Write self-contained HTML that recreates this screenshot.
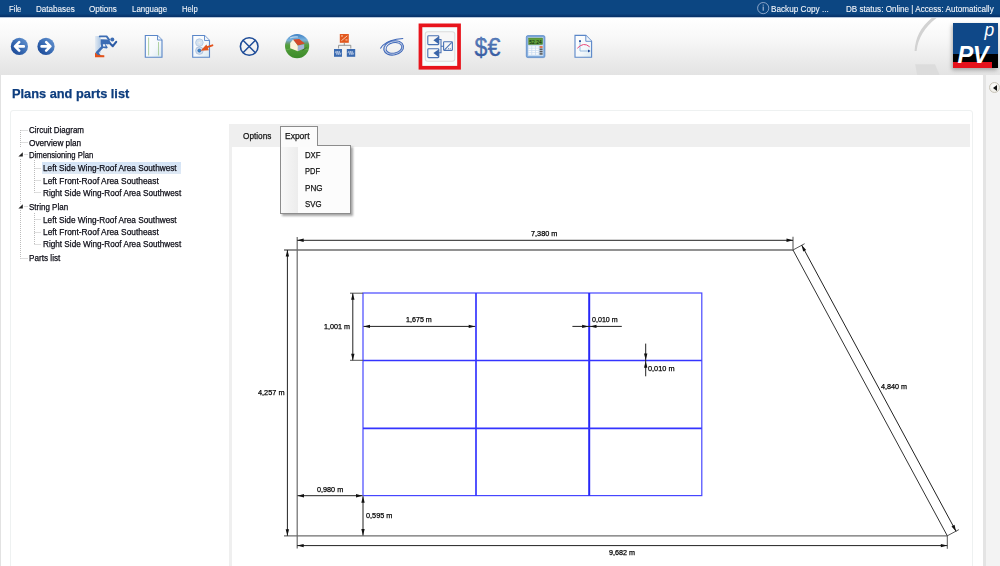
<!DOCTYPE html>
<html><head><meta charset="utf-8">
<style>
html,body{margin:0;padding:0;}
body{width:1000px;height:566px;overflow:hidden;position:relative;background:#fff;font-family:"Liberation Sans",sans-serif;}
.a{position:absolute;}
.t{position:absolute;white-space:nowrap;line-height:1;transform-origin:0 0;font-family:"Liberation Sans",sans-serif;-webkit-text-stroke:0.25px currentColor;}
</style></head><body>
<!-- menu bar -->
<div class="a" style="left:0;top:0;width:1000px;height:17px;background:linear-gradient(#0c4682 0%,#0c4682 80%,#062f66 100%);"></div>
<div class="a" style="left:0;top:17px;width:1000px;height:1px;background:#b8c8dc;"></div>
<!-- toolbar -->
<div class="a" style="left:0;top:18px;width:1000px;height:57px;background:linear-gradient(#ffffff 0%,#f8f8f8 35%,#ededed 68%,#e3e3e3 100%);"></div>
<!-- content -->
<div class="a" style="left:0;top:75px;width:1px;height:491px;background:#e2e2e2;"></div>
<div class="a" style="left:983px;top:75px;width:3px;height:491px;background:#e4e4e4;"></div>
<div class="a" style="left:986px;top:75px;width:14px;height:491px;background:#f3f3f3;"></div>
<!-- inner panel -->
<div class="a" style="left:10px;top:110px;width:961px;height:470px;border:1px solid #eef1f1;border-radius:3px;"></div>
<!-- tab bar -->
<div class="a" style="left:229px;top:124px;width:741px;height:22.5px;background:#efefef;"></div>
<div class="a" style="left:229px;top:146px;width:3px;height:420px;background:#efefef;"></div>
<!-- arc decoration -->
<svg class="a" style="left:0;top:0" width="1000" height="75" viewBox="0 0 1000 75">
<path d="M931.8,18 Q915.5,31 914.6,51 L916.6,51 Q918.5,32 936.5,18 Z" fill="#d2d2d2"/>
<path d="M915.2,64.2 L935,64.2 L939.6,75 L917.2,75 Z" fill="#dcdcdc"/>
</svg>
<!-- logo -->
<div class="a" style="left:952.5px;top:23px;width:45px;height:45.2px;box-shadow:-1px 2px 4px rgba(0,0,0,0.3);"></div>
<div class="a" style="left:952.5px;top:23px;width:45px;height:31px;background:#0f4888;"></div>
<div class="a" style="left:952.5px;top:53.5px;width:45px;height:14.7px;background:#000;"></div>
<div class="a" style="left:952.5px;top:62.3px;width:39.7px;height:5.8px;background:#e5121c;"></div>
<div class="t" style="left:957.5px;top:43.5px;font-size:23.5px;font-weight:bold;font-style:italic;color:#fff;letter-spacing:-0.3px;-webkit-text-stroke:0;">PV</div>
<div class="t" style="left:984.5px;top:21.5px;font-size:17.5px;font-style:italic;color:#fff;-webkit-text-stroke:0;">p</div>
<!-- side button -->
<div class="a" style="left:989px;top:82px;width:11px;height:11px;border-radius:50%;background:radial-gradient(circle at 40% 35%,#ffffff,#e6e4dc);border:1px solid #c8c4b8;box-sizing:border-box;"></div>
<div class="a" style="left:992.5px;top:85px;width:0;height:0;border-top:3px solid transparent;border-bottom:3px solid transparent;border-right:4px solid #111;"></div>
<!-- icons -->
<svg class="a" style="left:0;top:0" width="1000" height="75" viewBox="0 0 1000 75">
<defs>
<linearGradient id="gb" x1="1" y1="0" x2="0" y2="1"><stop offset="0" stop-color="#6c9ad4"/><stop offset="0.5" stop-color="#3a6cb4"/><stop offset="1" stop-color="#123f8f"/></linearGradient>
<linearGradient id="doc" x1="0" y1="0" x2="1" y2="1"><stop offset="0" stop-color="#ffffff"/><stop offset="0.6" stop-color="#f4f8fb"/><stop offset="1" stop-color="#d8e8f0"/></linearGradient>
<linearGradient id="glob" x1="0" y1="0" x2="0" y2="1"><stop offset="0" stop-color="#3f80c4"/><stop offset="0.25" stop-color="#7ab4de"/><stop offset="0.36" stop-color="#6a9a80"/><stop offset="0.46" stop-color="#54a03c"/><stop offset="1" stop-color="#3c8a2a"/></linearGradient>
<linearGradient id="motion" x1="0" y1="0" x2="1" y2="0"><stop offset="0" stop-color="#dfe8f2"/><stop offset="1" stop-color="#9ebde0"/></linearGradient>
<linearGradient id="money" x1="0" y1="0" x2="0" y2="1"><stop offset="0" stop-color="#6a8fc8"/><stop offset="1" stop-color="#2a4f98"/></linearGradient>
</defs>
<circle cx="19.4" cy="46.4" r="8.6" fill="url(#gb)"/>
<path d="M23.8,46.4 H15.2 M19.2,42.2 L15.0,46.4 L19.2,50.6" fill="none" stroke="#fff" stroke-width="2.6" stroke-linecap="round" stroke-linejoin="round"/>
<circle cx="46.0" cy="46.4" r="8.6" fill="url(#gb)"/>
<path d="M41.6,46.4 H50.2 M46.2,42.2 L50.4,46.4 L46.2,50.6" fill="none" stroke="#fff" stroke-width="2.6" stroke-linecap="round" stroke-linejoin="round"/>
<rect x="95" y="36" width="5.5" height="17" fill="url(#motion)" opacity="0.8"/>
<g fill="none" stroke="#3d6db4" stroke-linecap="round" stroke-linejoin="round"><path d="M99.8,36.4 H106.6 L109.2,39.8" stroke-width="1.9"/><path d="M109.6,43.0 L112.8,46.2 L116.2,41.8" stroke-width="2.1" stroke="#2d5ca6"/><path d="M103.2,46.2 L97,52.6 L99.4,55.6" stroke-width="2.5"/></g>
<path d="M100.6,39.2 L108.6,39.6 L110.8,42.6 L108.2,44.4 L105.4,44 L107.8,47.4 L106.8,48.6 L101.6,47.8 L100.6,44 Z" fill="#3d6db4"/>
<polygon points="102.8,44.2 104.8,44.3 105.6,46.6 103.2,46.6" fill="#f0f4fa"/>
<circle cx="112.3" cy="39.5" r="2.0" fill="#3d6db4"/>
<polygon points="95,52.6 98,55 104.3,55.3 104.3,57.3 95,57.3" fill="#e2521a"/>
<path d="M145.3,35.5 H157.5 L162,40 V57.2 H145.3 Z" fill="url(#doc)" stroke="#5a86c8" stroke-width="1.1"/>
<path d="M157.5,35.5 V40 H162" fill="#eef4fa" stroke="#5a86c8" stroke-width="0.9"/>
<line x1="148.6" y1="37.5" x2="148.6" y2="55.5" stroke="#a8cc98" stroke-width="0.9"/>
<line x1="158.5" y1="42" x2="158.5" y2="55.5" stroke="#a8cc98" stroke-width="0.9"/>
<path d="M192.7,35.5 H204.5 L209.5,40.5 V57.2 H192.7 Z" fill="url(#doc)" stroke="#5a86c8" stroke-width="1.1"/>
<path d="M204.5,35.5 V40.5 H209.5" fill="#eef4fa" stroke="#5a86c8" stroke-width="0.9"/>
<circle cx="199.4" cy="42.6" r="3.8" fill="#d4e2f0" stroke="#a6bedc" stroke-width="0.7"/>
<circle cx="199.4" cy="42.6" r="0.9" fill="#f4f0e8"/>
<circle cx="199.4" cy="50.6" r="3.8" fill="#d0def0" stroke="#a0b8d8" stroke-width="0.7"/>
<circle cx="199.4" cy="50.6" r="1.6" fill="#3c8ad0" stroke="#1e4e90" stroke-width="0.5"/>
<polygon points="200.6,50.8 206.4,44.6 208.8,50.3" fill="#e2541e"/>
<line x1="205.8" y1="47.6" x2="212.4" y2="45.3" stroke="#e2541e" stroke-width="1.9" stroke-linecap="round"/>
<circle cx="249.2" cy="46.5" r="8.8" fill="none" stroke="#1e4c98" stroke-width="1.6"/>
<path d="M243.0,40.3 L255.4,52.7 M255.4,40.3 L243.0,52.7" stroke="#1e4c98" stroke-width="1.5"/>
<circle cx="297.1" cy="46.1" r="12.1" fill="url(#glob)"/>
<path d="M286,50 Q297,46 309,50" stroke="#8cc870" stroke-width="0.6" fill="none" opacity="0.6"/>
<path d="M290,38 Q294,36.5 298,37" stroke="#d8e8f4" stroke-width="1.2" fill="none" opacity="0.8"/>
<path d="M304,48.6 L307.3,46.9 L302,51 Z" fill="#2a3328" opacity="0.75"/>
<path d="M290.2,43.1 L293.1,39.4 L297.9,45.4 L297.9,51.3 L290.2,48.3 Z" fill="#fbf3dc"/>
<path d="M293.1,39.4 L299.3,38.9 L304.8,43.6 L297.9,45.4 Z" fill="#d44a2a"/>
<path d="M297.9,45.4 L304.2,44.2 L304.2,48.6 L297.9,51.3 Z" fill="#a4b4d6"/>
<rect x="339.8" y="34" width="9" height="8.8" fill="#e2571e"/>
<path d="M341.3,40.8 L347.3,35.8" stroke="#fde0c8" stroke-width="0.8"/><rect x="341" y="35.5" width="2" height="0.9" fill="#fde0c8"/><rect x="345.5" y="39.5" width="2" height="0.9" fill="#fde0c8"/>
<path d="M344.3,42.8 V45.3 M338.6,48.5 V45.3 H350.8 V48.5" fill="none" stroke="#8a8a8a" stroke-width="0.9"/>
<rect x="334" y="49" width="8" height="7.8" fill="#3a6ab0"/><rect x="346.8" y="49" width="8.4" height="7.8" fill="#3a6ab0"/>
<path d="M334.8,52.9 h0.6 l0.7,-1.8 l0.8,3.6 l0.8,-3.6 l0.8,3.6 l0.8,-3.6 l0.8,3.6 l0.7,-1.8 h0.6 M347.6,52.9 h0.6 l0.7,-1.8 l0.8,3.6 l0.8,-3.6 l0.8,3.6 l0.8,-3.6 l0.8,3.6 l0.7,-1.8 h0.6" stroke="#dfe8f6" stroke-width="0.55" fill="none"/>
<g fill="none" stroke="#3d66b8"><ellipse cx="393.6" cy="47.9" rx="10.0" ry="7.0" transform="rotate(-12 393.6 47.9)" stroke-width="1.1"/><ellipse cx="393.9" cy="47.9" rx="8.0" ry="5.2" transform="rotate(-12 393.9 47.9)" stroke-width="1.0"/><ellipse cx="393.4" cy="47.5" rx="9.1" ry="6.2" transform="rotate(-12 393.4 47.5)" stroke-width="0.6" stroke="#7a98d0"/><path d="M380.4,48.6 C382.5,44.5 389,40.6 396.5,39.2 L403.2,38.5" stroke-width="1.1"/></g>
<rect x="420.45" y="25.35" width="38.6" height="42.4" fill="#f6fdfd" stroke="#e8141c" stroke-width="3.7"/>
<rect x="425.3" y="31.7" width="29.5" height="29.5" rx="2.5" fill="#f7f7f7" stroke="#dcdcdc" stroke-width="1.1"/>
<g stroke="#4a72b4" fill="none" stroke-width="1.1"><rect x="427.8" y="35.8" width="11" height="8.8" rx="0.8"/><rect x="427.8" y="48.8" width="11" height="8.8" rx="0.8"/><path d="M438.8,39.5 H441 V52.8 H438.8 M441,46.2 H443.5"/><rect x="443.6" y="41.8" width="8.8" height="8.6" rx="0.6"/><path d="M444.5,49.8 L451.8,42.4"/></g>
<polygon points="433.4,40.2 438.9,36.3 438.9,44.3" fill="#3a64a8"/>
<polygon points="433.4,53.0 438.9,49.2 438.9,57.2" fill="#3a64a8"/>
<rect x="448" y="48.3" width="1" height="0.9" fill="#4a72b4"/><rect x="449.8" y="48.3" width="1" height="0.9" fill="#4a72b4"/>
<text x="474.6" y="56.0" font-family="Liberation Sans" font-size="26" fill="url(#money)" stroke="#3a5ea6" stroke-width="0.35" textLength="25.8" lengthAdjust="spacingAndGlyphs">$€</text>
<rect x="526.3" y="35.6" width="18.6" height="22" rx="1.5" fill="#7aa6da" stroke="#5d8cc8" stroke-width="0.8"/>
<rect x="527.8" y="37.2" width="15.6" height="18.9" fill="#c8dcf2"/>
<rect x="528.5" y="38" width="14.2" height="6.6" fill="#5e9e3e" stroke="#4a7a30" stroke-width="0.4"/>
<text x="529.3" y="43.5" font-family="Liberation Sans" font-size="5.6" fill="#0a1a05" textLength="12.5" lengthAdjust="spacingAndGlyphs">52.24</text>
<rect x="528.6" y="46.2" width="2.8" height="1.6" fill="#fbfbfb"/><rect x="532.2" y="46.2" width="2.8" height="1.6" fill="#fbfbfb"/><rect x="535.8" y="46.2" width="2.8" height="1.6" fill="#fbfbfb"/><rect x="539.6" y="46.2" width="3" height="1.6" fill="#e8602a"/><rect x="528.6" y="48.5" width="2.8" height="1.6" fill="#fbfbfb"/><rect x="532.2" y="48.5" width="2.8" height="1.6" fill="#fbfbfb"/><rect x="535.8" y="48.5" width="2.8" height="1.6" fill="#fbfbfb"/><rect x="539.6" y="48.5" width="3" height="1.6" fill="#5a5a5a"/><rect x="528.6" y="50.8" width="2.8" height="1.6" fill="#fbfbfb"/><rect x="532.2" y="50.8" width="2.8" height="1.6" fill="#fbfbfb"/><rect x="535.8" y="50.8" width="2.8" height="1.6" fill="#fbfbfb"/><rect x="539.6" y="50.8" width="3" height="1.6" fill="#5a5a5a"/><rect x="528.6" y="53.1" width="2.8" height="1.6" fill="#fbfbfb"/><rect x="532.2" y="53.1" width="2.8" height="1.6" fill="#fbfbfb"/><rect x="535.8" y="53.1" width="2.8" height="1.6" fill="#fbfbfb"/><rect x="539.6" y="53.1" width="3" height="1.6" fill="#5a5a5a"/>
<path d="M575,35.4 H585.8 L591.6,41.3 V57.3 H575 Z" fill="url(#doc)" stroke="#5a86c8" stroke-width="1.1"/>
<path d="M585.8,35.4 V41.3 H591.6" fill="#eef4fa" stroke="#5a86c8" stroke-width="0.9"/>
<path d="M580,41 V51 H590" fill="none" stroke="#8cb4dc" stroke-width="0.9"/>
<rect x="579.1" y="40.2" width="1.8" height="1.8" fill="#234a9a"/><polygon points="590.5,51 588,49.6 588,52.4" fill="#234a9a"/>
<path d="M577.3,48.3 Q583.5,41.5 589.7,46.8" fill="none" stroke="#e8467a" stroke-width="1"/>
<circle cx="763.2" cy="8.1" r="5.6" fill="none" stroke="#8aa4c8" stroke-width="1"/>
<rect x="762.7" y="6.5" width="1" height="4.2" fill="#b8c8e0"/><rect x="762.7" y="4.6" width="1" height="1" fill="#b8c8e0"/>
</svg>
<!-- drawing -->
<svg class="a" style="left:0;top:0" width="1000" height="566" viewBox="0 0 1000 566">
<line x1="284.00" y1="250.00" x2="793.00" y2="250.00" stroke="#6e6e6e" stroke-width="1.3"/>
<line x1="284.00" y1="535.80" x2="947.30" y2="535.80" stroke="#6e6e6e" stroke-width="1.3"/>
<line x1="297.20" y1="237.00" x2="297.20" y2="548.50" stroke="#6a6a6a" stroke-width="1.2"/>
<line x1="793.00" y1="236.80" x2="793.00" y2="250.50" stroke="#6a6a6a" stroke-width="1.2"/>
<line x1="947.30" y1="535.50" x2="947.30" y2="548.80" stroke="#555" stroke-width="1"/>
<line x1="793.00" y1="250.00" x2="947.30" y2="535.80" stroke="#333" stroke-width="1"/>
<line x1="793.00" y1="250.00" x2="804.60" y2="243.70" stroke="#444" stroke-width="0.9"/>
<line x1="947.30" y1="535.80" x2="958.90" y2="529.60" stroke="#444" stroke-width="0.9"/>
<line x1="297.20" y1="240.30" x2="793.00" y2="240.30" stroke="#222" stroke-width="1"/>
<polygon points="793.00,240.30 786.50,242.00 786.50,238.60" fill="#111"/>
<polygon points="297.20,240.30 303.70,238.60 303.70,242.00" fill="#111"/>
<line x1="297.20" y1="545.60" x2="947.30" y2="545.60" stroke="#222" stroke-width="1"/>
<polygon points="947.30,545.60 940.80,547.30 940.80,543.90" fill="#111"/>
<polygon points="297.20,545.60 303.70,543.90 303.70,547.30" fill="#111"/>
<line x1="287.40" y1="250.00" x2="287.40" y2="535.80" stroke="#222" stroke-width="1"/>
<polygon points="287.40,535.80 285.70,529.30 289.10,529.30" fill="#111"/>
<polygon points="287.40,250.00 289.10,256.50 285.70,256.50" fill="#111"/>
<line x1="801.60" y1="245.00" x2="956.10" y2="531.40" stroke="#222" stroke-width="1"/>
<polygon points="956.10,531.40 951.52,526.49 954.51,524.87" fill="#111"/>
<polygon points="801.60,245.00 806.18,249.91 803.19,251.53" fill="#111"/>
<rect x="363" y="293" width="338.8" height="202.6" fill="none" stroke="#4646ff" stroke-width="1.2"/>
<line x1="476.00" y1="293.00" x2="476.00" y2="495.70" stroke="#3434ff" stroke-width="1.7"/>
<line x1="589.20" y1="293.00" x2="589.20" y2="495.70" stroke="#2828f8" stroke-width="2.0"/>
<line x1="363.00" y1="360.50" x2="701.80" y2="360.50" stroke="#3434ff" stroke-width="1.7"/>
<line x1="363.00" y1="428.30" x2="701.80" y2="428.30" stroke="#3434ff" stroke-width="1.7"/>
<line x1="350.00" y1="293.20" x2="363.00" y2="293.20" stroke="#555" stroke-width="1"/>
<line x1="350.00" y1="360.30" x2="363.00" y2="360.30" stroke="#555" stroke-width="1"/>
<line x1="352.80" y1="293.20" x2="352.80" y2="360.30" stroke="#222" stroke-width="1"/>
<polygon points="352.80,360.30 351.10,353.80 354.50,353.80" fill="#111"/>
<polygon points="352.80,293.20 354.50,299.70 351.10,299.70" fill="#111"/>
<line x1="363.50" y1="326.40" x2="475.20" y2="326.40" stroke="#222" stroke-width="1"/>
<polygon points="475.20,326.40 468.70,328.10 468.70,324.70" fill="#111"/>
<polygon points="363.50,326.40 370.00,324.70 370.00,328.10" fill="#111"/>
<line x1="572.40" y1="326.40" x2="621.80" y2="326.40" stroke="#222" stroke-width="1"/>
<polygon points="588.60,326.40 582.10,328.10 582.10,324.70" fill="#111"/>
<polygon points="590.00,326.40 596.50,324.70 596.50,328.10" fill="#111"/>
<line x1="645.70" y1="343.60" x2="645.70" y2="376.30" stroke="#222" stroke-width="1"/>
<polygon points="645.70,360.00 644.00,353.50 647.40,353.50" fill="#111"/>
<polygon points="645.70,361.20 647.40,367.70 644.00,367.70" fill="#111"/>
<line x1="297.50" y1="495.70" x2="362.50" y2="495.70" stroke="#222" stroke-width="1"/>
<polygon points="362.50,495.70 356.00,497.40 356.00,494.00" fill="#111"/>
<polygon points="297.50,495.70 304.00,494.00 304.00,497.40" fill="#111"/>
<line x1="363.00" y1="496.20" x2="363.00" y2="535.50" stroke="#222" stroke-width="1"/>
<polygon points="363.00,535.50 361.30,529.00 364.70,529.00" fill="#111"/>
<polygon points="363.00,496.20 364.70,502.70 361.30,502.70" fill="#111"/>
</svg>
<!-- tree -->
<div class="a" style="left:41.9px;top:162.1px;width:138.7px;height:11.6px;background:linear-gradient(#d3e3f6,#dfe9f5);"></div>
<svg class="a" style="left:0;top:0" width="230" height="270" viewBox="0 0 230 270">
<g stroke="#bcbcbc" stroke-width="1" stroke-dasharray="1,1" fill="none">
<path d="M20.5,130 V147.5 M20.5,159 V203.5 M20.5,210 V258.5"/>
<path d="M20.5,130.5 H28 M20.5,142.5 H28 M24.5,154.5 H28 M24.5,206.5 H28 M20.5,258.5 H28"/>
<path d="M34.5,160 V192.5 M34.5,213 V244.5"/>
<path d="M34.5,168.5 H41 M34.5,180.5 H41 M34.5,192.5 H41 M34.5,219.5 H41 M34.5,232.5 H41 M34.5,244.5 H41"/>
</g>
<polygon points="22.8,152.2 22.8,156.6 18.4,156.6" fill="#222"/>
<polygon points="22.8,204.2 22.8,208.6 18.4,208.6" fill="#222"/>
</svg>
<!-- export tab + dropdown -->
<div class="a" style="left:279.5px;top:126.3px;width:38px;height:19px;border:1px solid #8c8c8c;border-bottom:none;background:#fbfbfb;box-sizing:border-box;"></div>
<div class="a" style="left:282px;top:147px;width:70.5px;height:68.5px;background:rgba(0,0,0,0.35);filter:blur(0.8px);"></div>
<div class="a" style="left:279.5px;top:144.5px;width:71.2px;height:69.5px;border:1px solid #8c8c8c;border-top:none;background:#fcfcfc;box-sizing:border-box;"></div>
<div class="a" style="left:317px;top:144.5px;width:33.7px;height:1px;background:#8c8c8c;"></div>
<div class="a" style="left:280.5px;top:145.5px;width:17.3px;height:67.5px;background:linear-gradient(90deg,#f8f8f8,#ececec);"></div>
<div class="a" style="left:280.5px;top:144.5px;width:36.5px;height:2px;background:#fbfbfb;"></div>
<span class="t" style="left:9.20px;top:3.87px;font-size:9.6px;font-weight:normal;color:#f4f6fa;transform:scaleX(0.8021);-webkit-text-stroke:0.1px currentColor;">File</span>
<span class="t" style="left:35.80px;top:3.87px;font-size:9.6px;font-weight:normal;color:#f4f6fa;transform:scaleX(0.8438);-webkit-text-stroke:0.1px currentColor;">Databases</span>
<span class="t" style="left:89.20px;top:3.87px;font-size:9.6px;font-weight:normal;color:#f4f6fa;transform:scaleX(0.8408);-webkit-text-stroke:0.1px currentColor;">Options</span>
<span class="t" style="left:131.70px;top:3.87px;font-size:9.6px;font-weight:normal;color:#f4f6fa;transform:scaleX(0.8223);-webkit-text-stroke:0.1px currentColor;">Language</span>
<span class="t" style="left:181.50px;top:3.87px;font-size:9.6px;font-weight:normal;color:#f4f6fa;transform:scaleX(0.7957);-webkit-text-stroke:0.1px currentColor;">Help</span>
<span class="t" style="left:771.40px;top:4.16px;font-size:9.5px;font-weight:normal;color:#f4f6fa;transform:scaleX(0.8619);-webkit-text-stroke:0.1px currentColor;">Backup Copy ...</span>
<span class="t" style="left:846.00px;top:4.16px;font-size:9.5px;font-weight:normal;color:#f4f6fa;transform:scaleX(0.8537);-webkit-text-stroke:0.1px currentColor;">DB status: Online | Access: Automatically</span>
<span class="t" style="left:12.00px;top:86.60px;font-size:13px;font-weight:bold;color:#0d3d7e;transform:scaleX(0.9840);">Plans and parts list</span>
<span class="t" style="left:29.00px;top:126.38px;font-size:9px;font-weight:normal;color:#0a0a14;transform:scaleX(0.8869);">Circuit Diagram</span>
<span class="t" style="left:29.00px;top:138.58px;font-size:9px;font-weight:normal;color:#0a0a14;transform:scaleX(0.9154);">Overview plan</span>
<span class="t" style="left:29.00px;top:150.68px;font-size:9px;font-weight:normal;color:#0a0a14;transform:scaleX(0.8555);">Dimensioning Plan</span>
<span class="t" style="left:43.40px;top:164.38px;font-size:9px;font-weight:normal;color:#0a0a14;transform:scaleX(0.9149);">Left Side Wing-Roof Area Southwest</span>
<span class="t" style="left:43.40px;top:176.58px;font-size:9px;font-weight:normal;color:#0a0a14;transform:scaleX(0.9291);">Left Front-Roof Area Southeast</span>
<span class="t" style="left:43.40px;top:188.68px;font-size:9px;font-weight:normal;color:#0a0a14;transform:scaleX(0.9084);">Right Side Wing-Roof Area Southwest</span>
<span class="t" style="left:28.80px;top:202.58px;font-size:9px;font-weight:normal;color:#0a0a14;transform:scaleX(0.8881);">String Plan</span>
<span class="t" style="left:43.40px;top:215.98px;font-size:9px;font-weight:normal;color:#0a0a14;transform:scaleX(0.9149);">Left Side Wing-Roof Area Southwest</span>
<span class="t" style="left:43.40px;top:228.28px;font-size:9px;font-weight:normal;color:#0a0a14;transform:scaleX(0.9291);">Left Front-Roof Area Southeast</span>
<span class="t" style="left:43.40px;top:240.48px;font-size:9px;font-weight:normal;color:#0a0a14;transform:scaleX(0.9084);">Right Side Wing-Roof Area Southwest</span>
<span class="t" style="left:28.80px;top:253.88px;font-size:9px;font-weight:normal;color:#0a0a14;transform:scaleX(0.9071);">Parts list</span>
<span class="t" style="left:242.80px;top:130.96px;font-size:9.5px;font-weight:normal;color:#111;transform:scaleX(0.8644);">Options</span>
<span class="t" style="left:285.10px;top:130.96px;font-size:9.5px;font-weight:normal;color:#111;transform:scaleX(0.8923);">Export</span>
<span class="t" style="left:305.40px;top:149.76px;font-size:9.5px;font-weight:normal;color:#111;transform:scaleX(0.8158);">DXF</span>
<span class="t" style="left:305.40px;top:166.06px;font-size:9.5px;font-weight:normal;color:#111;transform:scaleX(0.7895);">PDF</span>
<span class="t" style="left:305.40px;top:182.76px;font-size:9.5px;font-weight:normal;color:#111;transform:scaleX(0.8501);">PNG</span>
<span class="t" style="left:305.40px;top:199.36px;font-size:9.5px;font-weight:normal;color:#111;transform:scaleX(0.8224);">SVG</span>
<span class="t" style="left:531.40px;top:229.90px;font-size:7.8px;font-weight:normal;color:#000;transform:scaleX(0.9371);">7,380 m</span>
<span class="t" style="left:608.80px;top:548.90px;font-size:7.8px;font-weight:normal;color:#000;transform:scaleX(0.9229);">9,682 m</span>
<span class="t" style="left:257.50px;top:388.80px;font-size:7.8px;font-weight:normal;color:#000;transform:scaleX(0.9406);">4,257 m</span>
<span class="t" style="left:881.00px;top:383.30px;font-size:7.8px;font-weight:normal;color:#000;transform:scaleX(0.9229);">4,840 m</span>
<span class="t" style="left:324.00px;top:323.10px;font-size:7.8px;font-weight:normal;color:#000;transform:scaleX(0.9229);">1,001 m</span>
<span class="t" style="left:406.00px;top:316.10px;font-size:7.8px;font-weight:normal;color:#000;transform:scaleX(0.9158);">1,675 m</span>
<span class="t" style="left:592.30px;top:316.10px;font-size:7.8px;font-weight:normal;color:#000;transform:scaleX(0.9122);">0,010 m</span>
<span class="t" style="left:648.00px;top:364.70px;font-size:7.8px;font-weight:normal;color:#000;transform:scaleX(0.9406);">0,010 m</span>
<span class="t" style="left:316.80px;top:485.50px;font-size:7.8px;font-weight:normal;color:#000;transform:scaleX(0.9300);">0,980 m</span>
<span class="t" style="left:365.50px;top:511.70px;font-size:7.8px;font-weight:normal;color:#000;transform:scaleX(0.9371);">0,595 m</span>
</body></html>
